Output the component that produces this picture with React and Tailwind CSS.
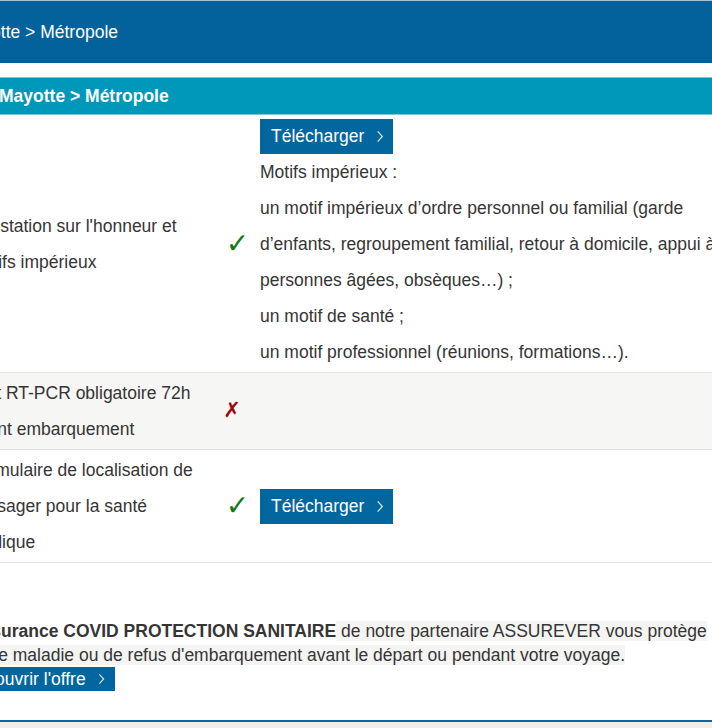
import React from 'react';

const Chevron = ({ className }) => (
    <svg viewBox="0 0 8 14" className={className} fill="none" stroke="currentColor" strokeWidth="1.4">
        <polyline points="1.5,1.5 6.5,7 1.5,12.5" />
    </svg>
);

const DownloadButton = () => (
    <a className="inline-flex items-center h-[35px] pl-[11px] pr-[9px] bg-[#03679f] text-white text-[17.5px]">
        Télécharger
        <Chevron className="w-[8px] h-[13px] ml-[12px] text-white/80" />
    </a>
);

const Check = () => <span className="ml-[-7px] text-[#12781a] text-[28px] font-bold font-['DejaVu_Sans',sans-serif]">✓</span>;
const Cross = () => <span className="ml-[-18px] text-[#9e0a0a] text-[21px] font-bold font-['DejaVu_Sans',sans-serif]">✗</span>;

const Row = ({ label, icon, children, gray }) => (
    <div className={`flex items-center border-b border-[#e4e4e2] ${gray ? 'bg-[#f6f6f4]' : 'bg-white'}`}>
        <div className="w-[253px] shrink-0 py-[2px] leading-[36px] whitespace-nowrap">{label}</div>
        <div className="w-[38px] shrink-0 flex justify-center">{icon}</div>
        <div className="flex-1 py-[2px] leading-[36px] whitespace-nowrap">{children}</div>
    </div>
);

export default function App() {
    return (
        <div className="w-[712px] h-[728px] overflow-hidden bg-white text-[#353535] text-[17.5px] font-['Liberation_Sans',Arial,sans-serif]">
            <div className="border-t border-[#a8c2d6] bg-[#03629b] h-[63px] flex items-center text-white">
                <span className="ml-[-42px] whitespace-nowrap">Mayotte &gt; Métropole</span>
            </div>
            <div className="h-[14px]" />
            <div className="h-[38px] bg-[#0098ba] border-y border-[#80c6d8] flex items-center text-white font-bold">
                <span className="ml-[-1px] whitespace-nowrap">Mayotte &gt; Métropole</span>
            </div>

            <div className="ml-[-31px] w-[820px]">
                <Row
                    label={<>Attestation sur l'honneur et<br />motifs impérieux</>}
                    icon={<Check />}
                >
                    <div className="pt-[1px]"><DownloadButton /></div>
                    <p>Motifs impérieux :</p>
                    <p>un motif impérieux d’ordre personnel ou familial (garde</p>
                    <p>d’enfants, regroupement familial, retour à domicile, appui à</p>
                    <p>personnes âgées, obsèques…) ;</p>
                    <p>un motif de santé ;</p>
                    <p>un motif professionnel (réunions, formations…).</p>
                </Row>
                <Row label={<>Test RT-PCR obligatoire 72h<br />avant embarquement</>} icon={<Cross />} gray />
                <Row
                    label={<>Formulaire de localisation de<br />passager pour la santé<br />publique</>}
                    icon={<Check />}
                >
                    <DownloadButton />
                </Row>
            </div>

            <div className="pt-[56px] h-[159px] border-b-2 border-[#0a67a3] leading-[24px] whitespace-nowrap">
                <p className="ml-[-43px]">
                    <strong>L'assurance COVID PROTECTION SANITAIRE</strong>
                    <span className="bg-[#f4f4f3]"> de notre partenaire ASSUREVER vous protège</span>
                </p>
                <p className="ml-[-68px]">
                    <span className="bg-[#f4f4f3]">en cas de maladie ou de refus d'embarquement avant le départ ou pendant votre voyage.</span>
                </p>
                <a className="ml-[-38px] inline-flex items-center h-[24px] pl-[2px] pr-[10px] bg-[#03679f] text-white">
                    Découvrir l'offre
                    <Chevron className="w-[7px] h-[12px] ml-[12px] text-white/80" />
                </a>
            </div>
            <div className="h-[10px] bg-[#eeeeee]" />
        </div>
    );
}
